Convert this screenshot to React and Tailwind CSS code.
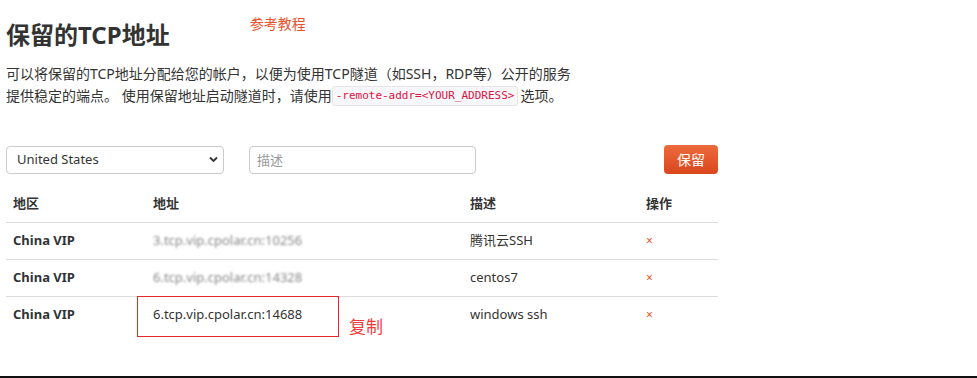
import { useState } from "react";

const font = { fontFamily: '"Noto Sans", "Noto Sans CJK SC", sans-serif' };

const rows = [
    { area: "China VIP", addr: "3.tcp.vip.cpolar.cn:10256", desc: "腾讯云SSH", blurred: true },
    { area: "China VIP", addr: "6.tcp.vip.cpolar.cn:14328", desc: "centos7", blurred: true },
    { area: "China VIP", addr: "6.tcp.vip.cpolar.cn:14688", desc: "windows ssh", marked: true },
];

export default function App() {
    const [region, setRegion] = useState("us");

    return (
        <div className="relative w-[977px] h-[378px] bg-white text-[#333] overflow-hidden" style={font}>
            <div className="pl-[6px] pt-[14px]">
                {/* header */}
                <div className="flex items-start">
                    <h1 className="mt-[5px] text-[24px] leading-[32px] font-bold text-[#333]">保留的TCP地址</h1>
                    <a className="ml-[80px] text-[14px] leading-[20px] text-[#e8532b]" href="#">参考教程</a>
                </div>

                <p className="mt-[12px] w-[575px] text-[14px] leading-[22px] text-[#333]">
                    可以将保留的TCP地址分配给您的帐户，以便为使用TCP隧道（如SSH，RDP等）公开的服务提供稳定的端点。 使用保留地址启动隧道时，请使用
                    <code
                        className="inline-block align-middle mb-[2px] px-[3px] rounded-[3px] border border-[#e6e6ea] bg-[#f7f7f9] text-[11px] leading-[18px] text-[#dd1144]"
                        style={{ fontFamily: '"DejaVu Sans Mono", monospace' }}
                    >
                        -remote-addr=&lt;YOUR_ADDRESS&gt;
                    </code>
                    <span className="ml-[2px]">选项。</span>
                </p>

                {/* form */}
                <div className="mt-[37px] flex items-center w-[712px]">
                    <div className="relative w-[218px] h-[28px]">
                        <select
                            value={region}
                            onChange={e => setRegion(e.target.value)}
                            className="appearance-none w-full h-full pl-[10px] pr-[24px] border border-[#ccc] rounded-[4px] bg-white text-[13px] text-[#333] outline-none"
                            style={font}
                        >
                            <option value="us">United States</option>
                            <option value="cn">China VIP</option>
                        </select>
                        <svg className="absolute right-[6px] top-[10px] pointer-events-none" width="9" height="7" viewBox="0 0 9 7">
                            <path d="M1 1.5 L4.5 5 L8 1.5" stroke="#333" strokeWidth="1.8" fill="none" />
                        </svg>
                    </div>
                    <input
                        placeholder="描述"
                        className="ml-[25px] w-[227px] h-[28px] px-[7px] border border-[#ccc] rounded-[4px] text-[13px] text-[#333] placeholder:text-[#999] outline-none"
                        style={font}
                    />
                    <button className="ml-auto w-[54px] h-[29px] rounded-[4px] bg-gradient-to-b from-[#ec6a3b] to-[#d9461c] text-white text-[14px]">
                        保留
                    </button>
                </div>

                {/* table */}
                <table className="mt-[12px] w-[712px] text-[13px] border-collapse">
                    <thead>
                        <tr className="border-b border-[#ddd]">
                            <th className="h-[36px] w-[140px] pl-[7px] text-left font-bold">地区</th>
                            <th className="w-[317px] pl-[7px] text-left font-bold">地址</th>
                            <th className="w-[176px] pl-[7px] text-left font-bold">描述</th>
                            <th className="pl-[7px] text-left font-bold">操作</th>
                        </tr>
                    </thead>
                    <tbody>
                        {rows.map((r, i) => (
                            <tr key={i} className={i < rows.length - 1 ? "border-b border-[#ddd]" : ""}>
                                <td className="h-[37px] pl-[7px] font-bold text-[13px]">{r.area}</td>
                                <td className="relative pl-[7px]">
                                    <span className={r.blurred ? "blur-[1.2px] text-[#888]" : "text-[#333]"}>{r.addr}</span>
                                    {r.marked && (
                                        <>
                                            <div className="absolute left-[-9px] top-[-1px] w-[202px] h-[41px] border border-[#e02a2a]" />
                                            <span className="absolute left-[203px] top-[20px] text-[17px] leading-[20px] text-[#f03c3c]">复制</span>
                                        </>
                                    )}
                                </td>
                                <td className="pl-[7px]">{r.desc}</td>
                                <td className="pl-[7px]">
                                    <span className="text-[#e8532b] text-[12px]">×</span>
                                </td>
                            </tr>
                        ))}
                    </tbody>
                </table>
            </div>
            <div className="absolute left-0 right-0 bottom-0 h-[2px] bg-[#111]" />
        </div>
    );
}
